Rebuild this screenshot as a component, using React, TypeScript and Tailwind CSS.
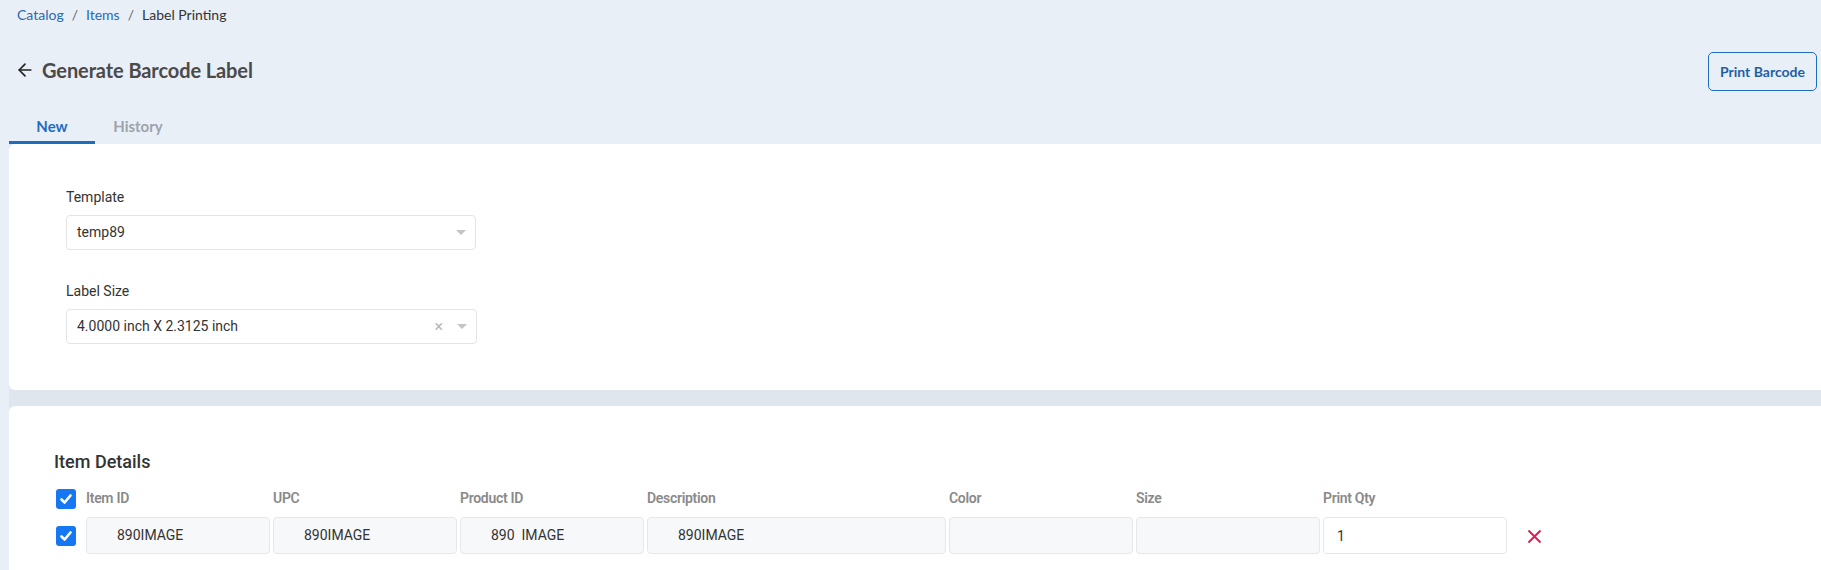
import { useState } from "react";
import { ArrowLeft } from "lucide-react";

interface LabelRow {
  itemId: string;
  upc: string;
  productId: string;
  description: string;
  color: string;
  size: string;
  qty: string;
}

const columns = ["Item ID", "UPC", "Product ID", "Description", "Color", "Size", "Print Qty"];

const gridCols = "grid grid-cols-[184px_184px_184px_299px_184px_184px_184px] gap-x-[3px]";

function Caret() {
  return (
    <svg width="10" height="6" viewBox="0 0 10 6" className="fill-[#c4c4c4]">
      <path d="M0 0h10L5 5z" />
    </svg>
  );
}

function Checkbox({ checked, onChange }: { checked: boolean; onChange: () => void }) {
  return (
    <button
      type="button"
      onClick={onChange}
      className={"w-5 h-5 rounded-[3px] flex items-center justify-center " + (checked ? "bg-[#1677f2]" : "bg-white border border-gray-300")}
    >
      {checked && (
        <svg width="14" height="14" viewBox="0 0 14 14" fill="none" stroke="white" strokeWidth={2.6} strokeLinecap="round" strokeLinejoin="round">
          <path d="M2.5 7.5 5.6 10.5 11.5 3.5" />
        </svg>
      )}
    </button>
  );
}

function SelectBox({ value, clearable, width }: { value: string; clearable?: boolean; width: string }) {
  return (
    <div className={`${width} h-[35px] border border-[#e4e4e4] rounded-[4px] bg-white flex items-center pl-[10px] pr-[9px]`}>
      <span className="flex-1 text-[14px] text-[#333]">{value}</span>
      {clearable && <span className="text-[#b5b5b5] text-[16px] leading-none mr-[14px]">×</span>}
      <Caret />
    </div>
  );
}

function App() {
  const [tab, setTab] = useState<"new" | "history">("new");
  const [allChecked, setAllChecked] = useState(true);
  const [rows, setRows] = useState<(LabelRow & { checked: boolean })[]>([
    { itemId: "890IMAGE", upc: "890IMAGE", productId: "890  IMAGE", description: "890IMAGE", color: "", size: "", qty: "1", checked: true },
  ]);

  return (
    <main className="min-h-screen bg-[#e8eff7] font-['Roboto',sans-serif]">
      {/* Header */}
      <div className="font-['Lato',sans-serif]">
        <div className="h-[28px] flex items-center pl-[17px] text-[14px] gap-[8px]">
          <span className="text-[#2769b3]">Catalog</span>
          <span className="text-[#666]">/</span>
          <span className="text-[#2769b3]">Items</span>
          <span className="text-[#666]">/</span>
          <span className="text-[#333]">Label Printing</span>
        </div>
        <div className="h-[84px] flex items-center justify-between pl-[15px] pr-[4px]">
          <div className="flex items-center gap-[7px]">
            <ArrowLeft size={20} strokeWidth={2} className="text-[#222]" />
            <h1 className="text-[20px] font-bold text-[#4a4a4a] tracking-[-0.1px]">Generate Barcode Label</h1>
          </div>
          <button className="mt-[3px] h-[39px] px-[11px] border-[1.5px] border-[#1f6cbd] rounded-[5px] text-[14px] font-bold text-[#1f5fa8]">
            Print Barcode
          </button>
        </div>
        <nav className="h-[32px] flex ml-[9px]">
          <button
            onClick={() => setTab("new")}
            className={"w-[86px] pt-1 pb-[5px] leading-5 text-[15px] font-bold border-b-[3px] " + (tab === "new" ? "border-[#1f6cbd] text-[#1f6cbd]" : "border-transparent text-[#9ea3a9]")}
          >
            New
          </button>
          <button
            onClick={() => setTab("history")}
            className={"w-[86px] pt-1 pb-[5px] leading-5 text-[15px] font-bold border-b-[3px] " + (tab === "history" ? "border-[#1f6cbd] text-[#1f6cbd]" : "border-transparent text-[#9ea3a9]")}
          >
            History
          </button>
        </nav>
      </div>

      {/* Cards */}
      <div className="ml-[9px] bg-[#dfe6ee] flex flex-col gap-[16px]">
        <section className="bg-white rounded-tl-[6px] rounded-bl-[6px] pl-[57px] pt-[43px] pb-[46px]">
          <label className="block text-[14px] leading-5 text-[#333] mb-[8px]">Template</label>
          <SelectBox value="temp89" width="w-[410px]" />
          <label className="block text-[14px] leading-5 text-[#333] mt-[31px] mb-[8px]">Label Size</label>
          <SelectBox value="4.0000 inch X 2.3125 inch" clearable width="w-[411px]" />
        </section>

        <section className="bg-white rounded-tl-[6px] pl-[47px] pt-[42px] pb-[16px] min-h-[164px]">
          <h2 className="-ml-[2px] text-[18px] leading-7 font-medium text-[#333]">Item Details</h2>
          <div className="mt-[12px] flex items-center gap-[10px]">
            <Checkbox checked={allChecked} onChange={() => setAllChecked(!allChecked)} />
            <div className={gridCols}>
              {columns.map((c) => (
                <span key={c} className="text-[14px] font-semibold text-[#8a8a8a] tracking-[-0.3px]">{c}</span>
              ))}
            </div>
          </div>
          {rows.map((r, i) => (
            <div key={i} className="mt-[8px] flex items-center gap-[10px]">
              <Checkbox
                checked={r.checked}
                onChange={() => setRows(rows.map((x, j) => (j === i ? { ...x, checked: !x.checked } : x)))}
              />
              <div className={gridCols}>
                {[r.itemId, r.upc, r.productId, r.description, r.color, r.size].map((v, k) => (
                  <div key={k} className="h-[37px] border border-[#e6e7ea] rounded-[4px] bg-[#f7f8fa] flex items-center pl-[30px] text-[14px] text-[#333] whitespace-pre">
                    {v}
                  </div>
                ))}
                <input
                  value={r.qty}
                  onChange={(e) => setRows(rows.map((x, j) => (j === i ? { ...x, qty: e.target.value } : x)))}
                  className="h-[37px] border border-[#e6e7ea] rounded-[4px] bg-white pl-[13px] text-[14px] text-[#333] outline-none"
                />
              </div>
              <button type="button" className="ml-[10px] mt-[2px]" onClick={() => setRows(rows.filter((_, j) => j !== i))}>
                <svg width="15" height="15" viewBox="0 0 15 15" stroke="#e8194c" strokeWidth={2} fill="none">
                  <path d="M1.5 1.5 13.5 13.5M13.5 1.5 1.5 13.5" />
                </svg>
              </button>
            </div>
          ))}
        </section>
      </div>
    </main>
  );
}

export default App;
